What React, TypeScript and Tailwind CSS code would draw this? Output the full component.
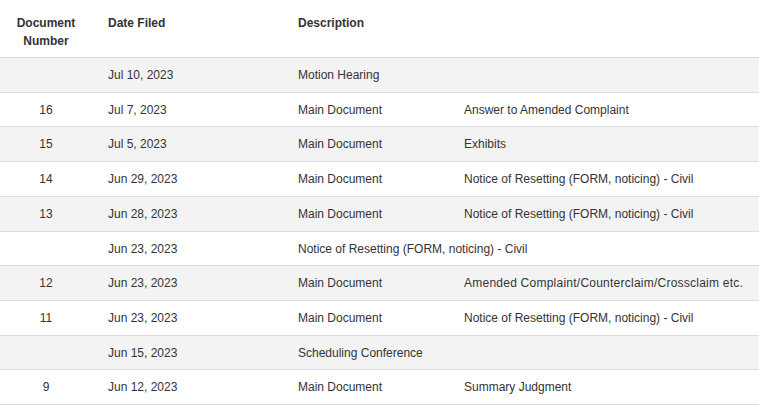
type Entry = {
  num?: string;
  date: string;
  desc: string;
  sub?: string;
  span?: boolean;
  wide?: boolean;
};

const entries: Entry[] = [
  { date: "Jul 10, 2023", desc: "Motion Hearing", span: true },
  { num: "16", date: "Jul 7, 2023", desc: "Main Document", sub: "Answer to Amended Complaint" },
  { num: "15", date: "Jul 5, 2023", desc: "Main Document", sub: "Exhibits" },
  { num: "14", date: "Jun 29, 2023", desc: "Main Document", sub: "Notice of Resetting (FORM, noticing) - Civil" },
  { num: "13", date: "Jun 28, 2023", desc: "Main Document", sub: "Notice of Resetting (FORM, noticing) - Civil" },
  { date: "Jun 23, 2023", desc: "Notice of Resetting (FORM, noticing) - Civil", span: true },
  { num: "12", date: "Jun 23, 2023", desc: "Main Document", sub: "Amended Complaint/Counterclaim/Crossclaim etc.", wide: true },
  { num: "11", date: "Jun 23, 2023", desc: "Main Document", sub: "Notice of Resetting (FORM, noticing) - Civil" },
  { date: "Jun 15, 2023", desc: "Scheduling Conference", span: true },
  { num: "9", date: "Jun 12, 2023", desc: "Main Document", sub: "Summary Judgment" },
];

const cell = "pt-[9px] pb-[7px] leading-[17.7px] align-middle whitespace-nowrap";
const head = "pt-[14px] pb-[7px] leading-[18px] font-bold align-top";

export default function App() {
  return (
    <div className="w-[759px] h-[405px] overflow-hidden bg-white text-[12px] text-[#333333] font-['Liberation_Sans',Arial,sans-serif]">
      <table className="w-full table-fixed border-collapse">
        <colgroup>
          <col className="w-[92px]" />
          <col className="w-[190px]" />
          <col className="w-[166px]" />
          <col />
        </colgroup>
        <thead>
          <tr className="border-b border-[#dddddd]">
            <th className={`${head} px-2 text-center`}>Document Number</th>
            <th className={`${head} pl-4 text-left`}>Date Filed</th>
            <th colSpan={2} className={`${head} pl-4 text-left`}>
              Description
            </th>
          </tr>
        </thead>
        <tbody>
          {entries.map((e, i) => (
            <tr key={i} className={`border-b border-[#dddddd] ${i % 2 === 0 ? "bg-[#f3f3f3]" : "bg-white"}`}>
              <td className={`${cell} px-2 text-center`}>{e.num ?? ""}</td>
              <td className={`${cell} pl-4`}>{e.date}</td>
              {e.span ? (
                <td colSpan={2} className={`${cell} pl-4`}>{e.desc}</td>
              ) : (
                <>
                  <td className={`${cell} pl-4`}>{e.desc}</td>
                  <td className={`${cell} pl-4 ${e.wide ? "tracking-[0.24px]" : ""}`}>{e.sub}</td>
                </>
              )}
            </tr>
          ))}
        </tbody>
      </table>
    </div>
  );
}
